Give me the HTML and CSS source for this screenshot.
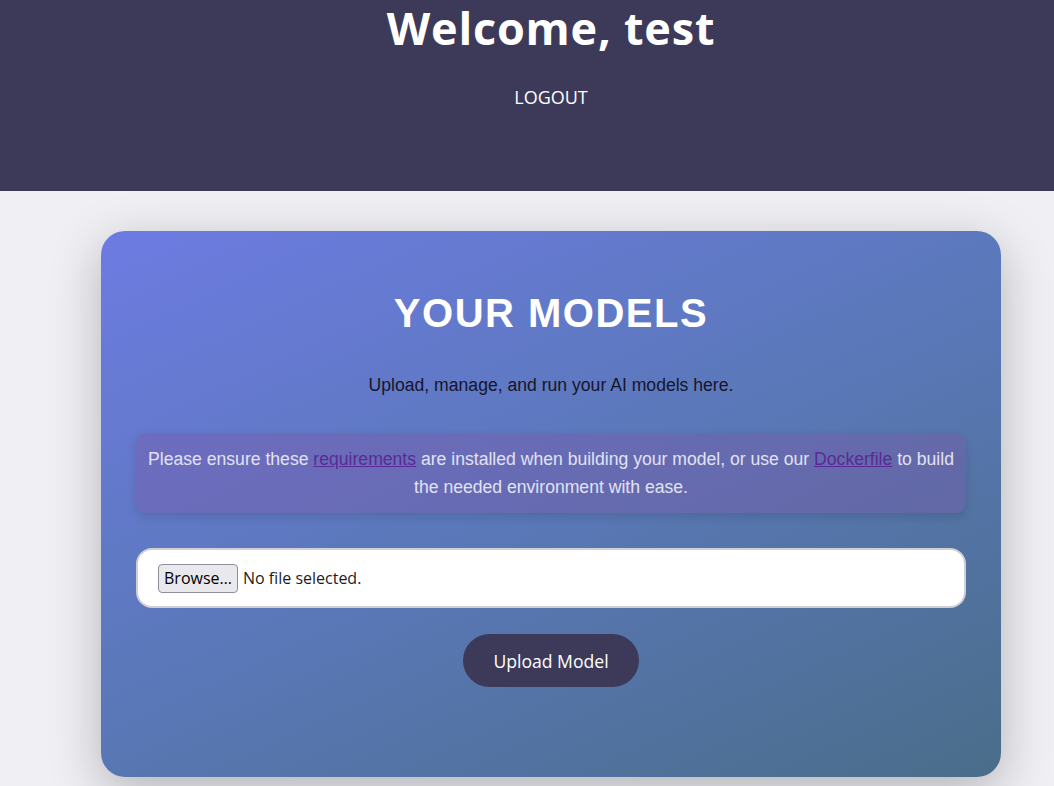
FILE: index.html
```html
<!DOCTYPE html>
<html lang="en">
<head>
<meta charset="utf-8">
<title>Your Models</title>
<link rel="stylesheet" href="styles.css">
</head>
<body>
  <header class="site-header">
    <h1 class="welcome">Welcome, test</h1>
    <a class="logout" href="#">LOGOUT</a>
  </header>
  <main class="main">
    <section class="card">
      <h2 class="card-title">Your Models</h2>
      <p class="subtitle">Upload, manage, and run your AI models here.</p>
      <div class="notice">
        Please ensure these <a class="notice-link" href="#">requirements</a> are installed when building your model, or use our <a class="notice-link" href="#">Dockerfile</a> to build the needed environment with ease.
      </div>
      <form class="upload-form">
        <div class="file-box">
          <label class="browse">Browse…<input class="file-input" type="file"></label>
          <span class="file-status">No file selected.</span>
        </div>
        <button class="upload-btn" type="button">Upload Model</button>
      </form>
    </section>
  </main>
</body>
</html>
```
FILE: styles.css
```css
html, body {
  margin: 0;
  padding: 0;
}
body {
  background: #f0eff4;
  font-family: "Open Sans", "Liberation Sans", sans-serif;
  min-height: 786px;
  overflow: hidden;
}
.site-header {
  background: #3c3a58;
  height: 191px;
  box-sizing: border-box;
  padding-left: 48px;
  display: flex;
  flex-direction: column;
  align-items: center;
}
.welcome {
  margin: -3px 0 0;
  color: #fff;
  font-family: "Open Sans", sans-serif;
  font-weight: 700;
  font-size: 45px;
  letter-spacing: 0.8px;
  line-height: 61px;
}
.logout {
  margin-top: 27px;
  color: #fff;
  text-decoration: none;
  font-size: 18px;
  line-height: 24px;
}
.main {
  padding: 40px 0 0 48px;
  display: flex;
  justify-content: center;
}
.card {
  width: 900px;
  box-sizing: border-box;
  height: 546px;
  padding: 59px 35px 0;
  border-radius: 24px;
  background: linear-gradient(155deg, #6d7be2 0%, #5a78b8 50%, #4a6d8a 100%);
  box-shadow: 0 14px 50px rgba(0, 0, 0, 0.25);
  display: flex;
  flex-direction: column;
  align-items: center;
}
.card-title {
  margin: 0;
  font-family: "Liberation Sans", Arial, sans-serif;
  font-weight: 700;
  font-size: 40px;
  line-height: 46px;
  letter-spacing: 1.5px;
  text-transform: uppercase;
  color: #fff;
}
.subtitle {
  margin: 39px 0 0;
  font-family: "Liberation Sans", Arial, sans-serif;
  font-size: 17.6px;
  line-height: 21px;
  color: #16162a;
}
.notice {
  margin-top: 37px;
  align-self: stretch;
  box-sizing: border-box;
  height: 80px;
  padding: 12px 10px;
  border-radius: 10px;
  background: rgba(125, 85, 165, 0.36);
  box-shadow: 0 4px 10px rgba(0, 0, 0, 0.12);
  font-family: "Liberation Sans", Arial, sans-serif;
  font-size: 17.6px;
  line-height: 28px;
  color: #e2e2f2;
  text-align: center;
}
.notice-link {
  color: #5a2a96;
  text-decoration: underline;
}
.upload-form {
  align-self: stretch;
  margin-top: 35px;
  display: flex;
  flex-direction: column;
  align-items: center;
}
.file-box {
  align-self: stretch;
  box-sizing: border-box;
  height: 60px;
  padding: 0 20px;
  border: 2px solid #cfcfd4;
  border-radius: 16px;
  background: #fff;
  display: flex;
  align-items: center;
  gap: 5px;
  font-size: 16px;
  color: #1c1c1c;
}
.browse {
  box-sizing: border-box;
  height: 29px;
  padding: 0 5px;
  border: 1px solid #8f8f9d;
  border-radius: 4px;
  background: #e9e9ed;
  display: flex;
  align-items: center;
  color: #000;
  cursor: pointer;
}
.file-input {
  display: none;
}
.file-status {
  line-height: 24px;
}
.upload-btn {
  margin-top: 26px;
  height: 53px;
  padding: 0 30px;
  border: none;
  border-radius: 27px;
  background: #3c3a58;
  color: #fff;
  font-family: "Open Sans", sans-serif;
  font-size: 17.6px;
  cursor: pointer;
}
```
